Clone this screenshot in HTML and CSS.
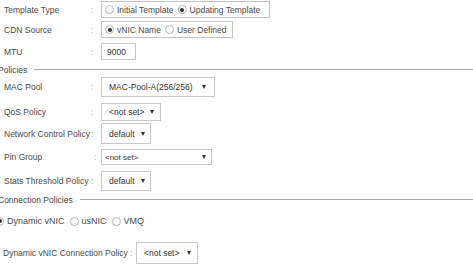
FILE: index.html
```html
<!DOCTYPE html>
<html lang="en">
<head>
  <meta charset="UTF-8">
  <title>vNIC Template</title>
  <link rel="stylesheet" href="styles.css">
</head>
<body>
  <div class="form">
    <div class="row row-type">
      <span class="label">Template Type</span><span class="colon">:</span>
      <div class="group">
        <span class="radio"></span><span>Initial Template</span>
        <span class="radio on"></span><span>Updating Template</span>
      </div>
    </div>
    <div class="row row-cdn">
      <span class="label">CDN Source</span><span class="colon">:</span>
      <div class="group">
        <span class="radio on"></span><span>vNIC Name</span>
        <span class="radio"></span><span>User Defined</span>
      </div>
    </div>
    <div class="row row-mtu">
      <span class="label">MTU</span><span class="colon">:</span>
      <div class="input">9000</div>
    </div>

    <div class="heading heading-pol"><span>Policies</span></div>

    <div class="row row-mac">
      <span class="label">MAC Pool</span><span class="colon">:</span>
      <div class="select">MAC-Pool-A(256/256)<span class="arrow"></span></div>
    </div>
    <div class="row row-qos">
      <span class="label">QoS Policy</span><span class="colon">:</span>
      <div class="select">&lt;not set&gt;<span class="arrow"></span></div>
    </div>
    <div class="row row-ncp">
      <span class="label">Network Control Policy</span><span class="colon">:</span>
      <div class="select">default<span class="arrow"></span></div>
    </div>
    <div class="row row-pin">
      <span class="label">Pin Group</span><span class="colon">:</span>
      <div class="select wide">&lt;not set&gt;<span class="arrow"></span></div>
    </div>
    <div class="row row-stats">
      <span class="label">Stats Threshold Policy</span><span class="colon">:</span>
      <div class="select">default<span class="arrow"></span></div>
    </div>

    <div class="heading heading-conn"><span>Connection Policies</span></div>

    <div class="radios">
      <span class="radio on"></span><span>Dynamic vNIC</span>
      <span class="radio"></span><span>usNIC</span>
      <span class="radio"></span><span>VMQ</span>
    </div>

    <div class="row row-dyn">
      <span class="label label-long">Dynamic vNIC Connection Policy</span><span class="colon">:</span>
      <div class="select">&lt;not set&gt;<span class="arrow"></span></div>
    </div>
  </div>
</body>
</html>
```

FILE: styles.css
```css
* {
  box-sizing: border-box;
}

body {
  margin: 0;
  background: #fff;
  font-family: 'Liberation Sans', Arial, sans-serif;
  font-size: 8.5px;
  color: #4a4a4a;
  overflow: hidden;
}

.form {
  padding: 1px 0 0 4px;
}

.row {
  display: flex;
  align-items: center;
  white-space: nowrap;
}

.label {
  width: 87px;
  flex-shrink: 0;
}

.label-long {
  width: 127px;
  margin-left: -1px;
}

.colon {
  width: 10px;
  flex-shrink: 0;
  color: #aaa;
}

.group {
  display: flex;
  align-items: center;
  height: 100%;
  padding: 0 4px 0 3px;
  border: 1px solid #c4c4c4;
  gap: 3px;
}

.group .radio + span {
  margin-right: 1px;
}

.radio {
  width: 9px;
  height: 9px;
  flex-shrink: 0;
  border: 1px solid #b5b5b5;
  border-radius: 50%;
  display: inline-flex;
  align-items: center;
  justify-content: center;
}

.radio.on::after {
  content: "";
  width: 4px;
  height: 4px;
  border-radius: 50%;
  background: #333;
}

.input, .select {
  display: flex;
  align-items: center;
  flex-shrink: 0;
  height: 100%;
  border: 1px solid #c8c8c8;
  color: #333;
}

.input {
  width: 35px;
  padding-left: 5px;
}

.select {
  justify-content: space-between;
  padding: 0 6px 0 7px;
}

.arrow {
  width: 0;
  height: 0;
  margin-left: 6px;
  border-left: 2.5px solid transparent;
  border-right: 2.5px solid transparent;
  border-top: 4px solid #333;
}

.wide {
  font-size: 8px;
  padding: 0 5px 0 3px;
}

.heading {
  display: flex;
  align-items: center;
  height: 13px;
  margin-left: -6px;
  color: #444;
}

.heading::after {
  content: "";
  flex: 1;
  height: 1px;
  margin-left: 7px;
  background: #a8a8a8;
}

.row-type { height: 17px; }
.row-type .group { width: 169px; }
.row-cdn { height: 17px; margin-top: 3px; }
.row-mtu { height: 17px; margin-top: 5px; }
.heading-pol { margin-top: 3px; }
.row-mac { height: 20px; margin-top: 1px; }
.row-mac .select { width: 114px; padding-right: 8px; }
.row-qos { height: 18px; margin-top: 6px; }
.row-qos .select { width: 60px; }
.row-ncp { height: 21px; margin-top: 2px; }
.row-ncp .select, .row-stats .select { width: 50px; }
.row-pin { height: 16px; margin-top: 5px; }
.row-pin .colon { width: 7px; margin-left: 3px; }
.row-pin .select { width: 111px; }
.row-stats { height: 20px; margin-top: 6px; }
.heading-conn { margin-top: 2px; }

.radios {
  display: flex;
  align-items: center;
  height: 12px;
  margin-top: 9px;
  margin-left: -9px;
  gap: 3px;
  font-size: 9px;
}

.radios .radio + span {
  margin-right: 2px;
}

.row-dyn { height: 22px; margin-top: 15px; }
.row-dyn .colon { width: 6px; }
.row-dyn .select { width: 62px; }
```
